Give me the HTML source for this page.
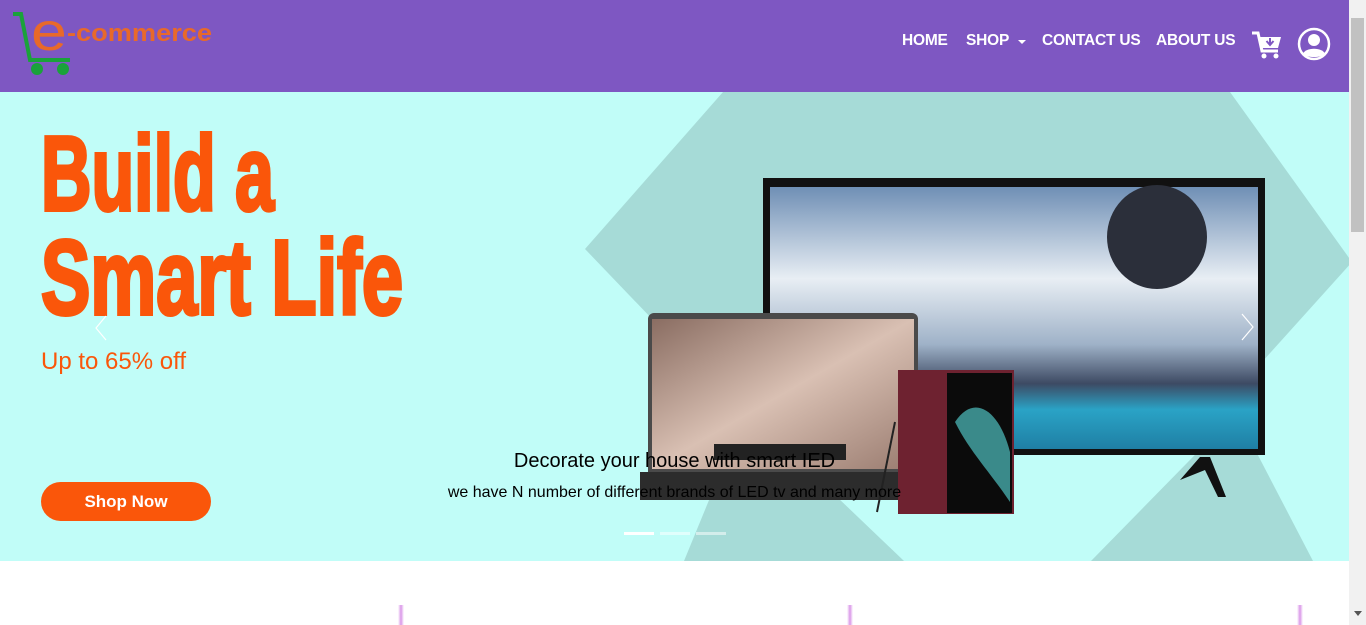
<!DOCTYPE html>
<html><head><meta charset="utf-8"><style>
*{margin:0;padding:0;box-sizing:border-box}
body{width:1366px;height:625px;overflow:hidden;background:#fff;font-family:"Liberation Sans",sans-serif;position:relative}
.hdr{position:absolute;left:0;top:0;width:1349px;height:92px;background:#7e57c2}
.nav{position:absolute;top:32px;color:#fff;font-weight:bold;font-size:15.5px;letter-spacing:-0.2px}
.hero{position:absolute;left:0;top:92px;width:1349px;height:469px;background:#c1fdf8;overflow:hidden}
.sb{position:absolute;left:1349px;top:0;width:17px;height:625px;background:#f1f1f1}
.thumb{position:absolute;left:1351px;top:18px;width:13px;height:214px;background:#c1c1c1}
.strip{position:absolute;top:605px;width:6px;height:20px;background:linear-gradient(90deg,rgba(214,140,230,0),rgba(214,140,230,.9),rgba(214,140,230,0))}
</style></head><body>
<div class="hdr">
<svg width="230" height="92" style="position:absolute;left:0;top:0">
<path d="M13 14 L21 14 L30 60 L70 60" fill="none" stroke="#1aa23a" stroke-width="4"/>
<circle cx="37" cy="69" r="6" fill="#1aa23a"/><circle cx="63" cy="69" r="6" fill="#1aa23a"/>
<text x="31" y="50" font-family="Liberation Sans" font-size="54" fill="#e8692a" textLength="36" lengthAdjust="spacingAndGlyphs">e</text>
<text x="67" y="41" font-family="Liberation Sans" font-weight="bold" font-size="24" fill="#e8692a" textLength="145" lengthAdjust="spacingAndGlyphs">-commerce</text>
</svg>
<div class="nav" style="left:902px">HOME</div>
<div class="nav" style="left:966px">SHOP</div>
<div style="position:absolute;left:1018px;top:40px;border-left:4px solid transparent;border-right:4px solid transparent;border-top:4px solid #fff"></div>
<div class="nav" style="left:1042px">CONTACT US</div>
<div class="nav" style="left:1156px">ABOUT US</div>
<svg width="32" height="30" style="position:absolute;left:1251px;top:30px" viewBox="0 0 32 30">
<path d="M1 3 H7 L11 21 H27" fill="none" stroke="#fff" stroke-width="3"/>
<path d="M9 7 H30 L27 18 H11 Z" fill="#fff"/>
<path d="M19 8 V14 M15.5 11 L19 15 L22.5 11" stroke="#7e57c2" stroke-width="2" fill="none"/>
<circle cx="13" cy="26" r="2.5" fill="#fff"/><circle cx="25" cy="26" r="2.5" fill="#fff"/>
</svg>
<svg width="34" height="34" style="position:absolute;left:1297px;top:27px" viewBox="0 0 34 34">
<circle cx="17" cy="17" r="15" fill="none" stroke="#fff" stroke-width="2.5"/>
<circle cx="17" cy="13" r="6" fill="#fff"/>
<path d="M6 27 C8 20 26 20 28 27 C24 31 10 31 6 27Z" fill="#fff"/>
</svg>
</div>
<div class="hero">
<svg width="1349" height="469" style="position:absolute;left:0;top:0">
<polygon points="723,0 1230,0 1352,170 1190,350 770,350 585,157" fill="#a6dbd7"/>
<polygon points="746,318 684,469 904,469" fill="#a6dbd7"/>
<polygon points="1236,321 1091,469 1313,469" fill="#a6dbd7"/>
<text x="41" y="118" font-family="Liberation Sans" font-weight="bold" font-size="106" fill="#fa560a" stroke="#fa560a" stroke-width="4" textLength="233" lengthAdjust="spacingAndGlyphs">Build a</text>
<text x="41" y="222" font-family="Liberation Sans" font-weight="bold" font-size="106" fill="#fa560a" stroke="#fa560a" stroke-width="4" textLength="362" lengthAdjust="spacingAndGlyphs">Smart Life</text>
<text x="41" y="277" font-family="Liberation Sans" font-size="24" fill="#fa560a">Up to 65% off</text>
<defs>
<linearGradient id="sky" x1="0" y1="0" x2="0" y2="1"><stop offset="0" stop-color="#6f8fb5"/><stop offset=".35" stop-color="#e8eef4"/><stop offset=".6" stop-color="#9fb2c8"/><stop offset=".75" stop-color="#3d4a63"/><stop offset=".85" stop-color="#2aa3c6"/><stop offset="1" stop-color="#1f7fa4"/></linearGradient>
<linearGradient id="lap" x1="0" y1="0" x2="1" y2="1"><stop offset="0" stop-color="#8a6d62"/><stop offset=".5" stop-color="#d9c0b3"/><stop offset="1" stop-color="#9a7c70"/></linearGradient>
</defs>
<rect x="763" y="86" width="502" height="277" fill="#111"/>
<rect x="770" y="95" width="488" height="262" fill="url(#sky)"/>
<ellipse cx="1157" cy="145" rx="50" ry="52" fill="#2b2f3a"/>
<path d="M1180 388 L1200 365 L1210 365 L1226 405 L1218 405 L1205 378 Z" fill="#111"/>
<rect x="648" y="221" width="270" height="170" rx="6" fill="#4a4a4a"/>
<rect x="652" y="227" width="262" height="150" fill="url(#lap)"/>
<rect x="714" y="352" width="132" height="16" fill="#222"/>
<rect x="640" y="380" width="258" height="28" fill="#2c2c2c"/>
<rect x="898" y="278" width="116" height="144" fill="#6e2230"/>
<rect x="947" y="281" width="65" height="140" fill="#0b0b0b"/>
<path d="M955 330 C975 300 1000 320 1010 360 L1010 410 C990 380 970 360 955 330Z" fill="#3a8a8a"/>
<path d="M895 330 L877 420" stroke="#222" stroke-width="2"/>
<path d="M106 224 L96 236 L106 248" fill="none" stroke="#fff" stroke-width="1.2"/>
<path d="M1242 222 L1253 235 L1242 248" fill="none" stroke="#fff" stroke-width="1.2"/>
<rect x="624" y="440" width="30" height="3" fill="#fff"/>
<rect x="660" y="440" width="30" height="3" fill="#fff" opacity=".5"/>
<rect x="696" y="440" width="30" height="3" fill="#fff" opacity=".5"/>
</svg>
<div style="position:absolute;left:0;width:1349px;top:358px;text-align:center;font-size:20px;color:#000">Decorate your house with smart IED</div>
<div style="position:absolute;left:0;width:1349px;top:392px;text-align:center;font-size:16px;color:#000">we have N number of different brands of LED tv and many more</div>
<div style="position:absolute;left:41px;top:390px;width:170px;height:39px;border-radius:20px;background:#fa560a;color:#fff;font-weight:bold;font-size:17px;text-align:center;line-height:39px">Shop Now</div>
</div>
<div class="strip" style="left:398px"></div>
<div class="strip" style="left:847px"></div>
<div class="strip" style="left:1297px"></div>
<div class="sb"></div><div class="thumb"></div>
<div style="position:absolute;left:1354px;top:611px;border-left:4px solid transparent;border-right:4px solid transparent;border-top:5px solid #555"></div>
</body></html>
